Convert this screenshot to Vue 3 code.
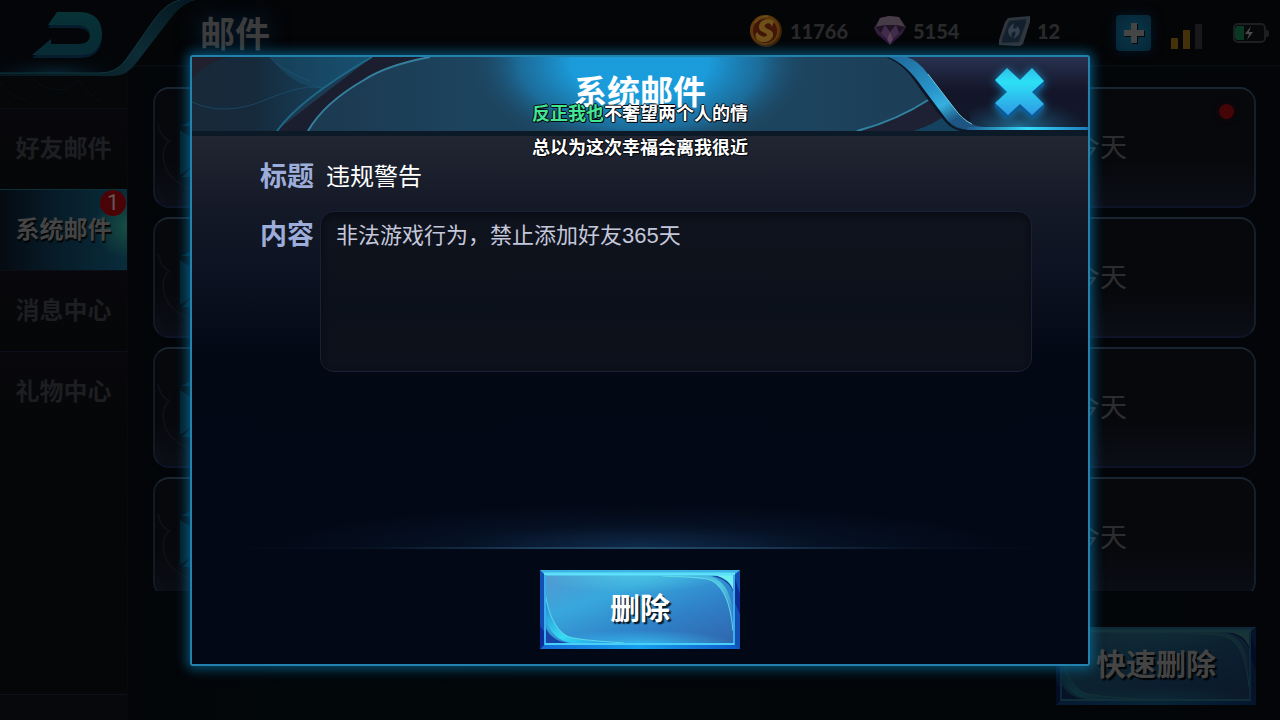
<script setup>
const tabs = [
  { name: '好友邮件' },
  { name: '系统邮件', active: true, count: 1 },
  { name: '消息中心' },
  { name: '礼物中心' },
]
const mails = [
  { id: 1, date: '今天', unread: true },
  { id: 2, date: '今天' },
  { id: 3, date: '今天' },
  { id: 4, date: '今天' },
]
const subject = '违规警告'
const content = '非法游戏行为，禁止添加好友365天'
</script>

<template>
  <div class="screen">
    <svg class="defs" width="0" height="0" aria-hidden="true">
      <defs>
        <linearGradient id="plateFace" x1="0" y1="0" x2="1" y2="1">
          <stop offset="0" stop-color="#5296d0" />
          <stop offset=".3" stop-color="#38a8dc" />
          <stop offset=".65" stop-color="#2f80c8" />
          <stop offset="1" stop-color="#3065ac" />
        </linearGradient>
        <radialGradient id="plateTop" cx=".45" cy="0" r=".5">
          <stop offset="0" stop-color="#4cc8e4" stop-opacity=".8" />
          <stop offset="1" stop-color="#4cc8e4" stop-opacity="0" />
        </radialGradient>
        <radialGradient id="plateBottom" cx=".5" cy="1" r=".5">
          <stop offset="0" stop-color="#35c4f4" stop-opacity=".8" />
          <stop offset="1" stop-color="#35c4f4" stop-opacity="0" />
        </radialGradient>
        <linearGradient id="plateEdge" x1="0" y1="0" x2="1" y2="0">
          <stop offset="0" stop-color="#156bd8" />
          <stop offset=".5" stop-color="#18a0ec" />
          <stop offset="1" stop-color="#0e58c8" />
        </linearGradient>
        <linearGradient id="plateCurl" x1="0" y1="0" x2="1" y2="1">
          <stop offset="0" stop-color="#2675d0" />
          <stop offset=".55" stop-color="#34dcf4" />
          <stop offset="1" stop-color="#2389dc" />
        </linearGradient>
        <linearGradient id="plateCurlTop" x1="0" y1="0" x2="1" y2="1">
          <stop offset="0" stop-color="#3aa4dc" />
          <stop offset=".5" stop-color="#4fc8e0" />
          <stop offset="1" stop-color="#2f6cc0" />
        </linearGradient>
      </defs>
      <symbol id="plate" viewBox="0 0 200 78" preserveAspectRatio="none">
        <path fill="#1250b4" d="M0 0H200V78H0z" />
        <path fill="#3db4e6" d="M0 0H200L194 5H5z" />
        <path fill="url(#plateEdge)" d="M0 78L5 73H194L200 78z" />
        <path fill="#0c2c98" d="M0 55L5 62V73L0 78zM194 5L200 24V44L194 30z" />
        <path fill="url(#plateFace)" d="M5 5H194V73H5z" />
        <path fill="url(#plateTop)" d="M5 5H194V40H5z" />
        <path fill="url(#plateBottom)" d="M5 45H194V73H5z" />
        <path fill="#1742a8" d="M5 55C9 66 18 72 32 72H5zM172 6C187 9 194 18 194 28V6z" />
        <path fill="url(#plateCurl)" d="M5 22C9 49 19 64 32 67C48 70 65 71 84 72H32C15 70 5 56 5 40z" />
        <path fill="url(#plateCurlTop)" d="M122 6H168C184 9 193 24 193 48V60C190 27 181 12 167 9C153 7 137 7 122 6z" />
        <path fill="#6ff0ee" d="M174 5H194V22C191 13 186 8 174 5z" />
        <path fill="none" stroke="#5dd6e8" stroke-width="1" d="M5 22C9 49 19 64 32 67C48 70 65 71 84 72M122 6C153 7 160 7 167 9C181 12 190 27 193 60" />
        <path fill="none" stroke="#5ee0fa" stroke-width="3" d="M4 4H195" />
        <path fill="none" stroke="#38aef0" stroke-width="2" d="M5 5V73H194V5" />
        <path fill="none" stroke="#48d0fa" stroke-width="2" d="M5 73H194" />
      </symbol>
    </svg>

    <header class="topbar">
      <button class="back" aria-label="返回">
        <svg viewBox="0 0 200 78">
          <defs>
            <linearGradient id="ribbon" x1="0" y1="1" x2="1" y2="0">
              <stop offset="0" stop-color="#06171f" />
              <stop offset=".5" stop-color="#0c2c35" />
              <stop offset="1" stop-color="#051720" />
            </linearGradient>
            <radialGradient id="shine" cx=".4" cy="1" r=".6">
              <stop offset="0" stop-color="#082433" stop-opacity=".9" />
              <stop offset="1" stop-color="#04080d" stop-opacity="0" />
            </radialGradient>
            <linearGradient id="arrow" x1="0" y1="0" x2="0" y2="1">
              <stop offset="0" stop-color="#073236" />
              <stop offset="1" stop-color="#082a34" />
            </linearGradient>
          </defs>
          <path fill="#030508" d="M0 0H178L130 62Q120 74 108 74H0z" />
          <path fill="url(#shine)" d="M0 42H136L125 66Q118 73 108 73H0z" />
          <path fill="url(#ribbon)" d="M0 73H100Q116 73 125 61L154 20Q166 3 180 0H196Q184 3 174 14L137 62Q127 76 114 76H0z" />
          <path fill="none" stroke="#0f363d" stroke-width="1" d="M0 73H100Q116 73 125 61L154 20Q166 3 180 0" />
          <path fill="#041c2b" d="M57 15L48 28H78Q90 29 90 38T78 47H51V42L32 58H82Q100 57 102 38Q102 17 82 15z" />
          <path fill="url(#arrow)" d="M57 12L48 25H78Q90 26 90 35T78 44H51V39L32 55H82Q100 54 102 35Q102 14 82 12z" />
        </svg>
      </button>
      <h1>邮件</h1>

      <div class="status">
        <div class="coin">
          <svg width="32" height="34" viewBox="0 0 32 34">
            <circle cx="16" cy="17" r="16" fill="#3a2007" />
            <circle cx="15" cy="16" r="15" fill="#5c380c" />
            <circle cx="15" cy="17" r="12" fill="#421508" />
            <path fill="#6e5119" d="M24 7C18 3 8 6 9 14C10 19 17 18 17 21C16 24 10 23 7 18C3 23 8 29 15 28C23 27 26 19 20 16C15 14 13 12 16 10C19 8 21 10 22 13z" />
            <path fill="none" stroke="#705b28" d="M5 9Q9 2 18 2" />
          </svg>
          <span>11766</span>
        </div>
        <div class="gem">
          <svg width="33" height="30" viewBox="0 0 33 30">
            <path fill="#302039" d="M1 12L7 2L16 0L26 1L33 11L29 18L17 29L4 18z" />
            <path fill="#453c47" d="M7 2L16 0L12 9L3 11zM16 0L26 1L23 9L12 9zM26 1L32 11L23 9z" />
            <path fill="#201326" d="M3 11L12 9L8 17zM12 9H23L17 16zM23 9L32 11L26 17z" />
            <path fill="#402b4a" d="M8 17L12 9L17 16L14 23zM17 16L23 9L26 17L20 23z" />
            <path fill="#301441" d="M5 18L14 23L17 29zM20 23L29 17L17 29z" />
            <path fill="#594358" d="M14 23L17 16L20 23L17 28z" />
          </svg>
          <span>5154</span>
        </div>
        <div class="ticket">
          <svg width="33" height="31" viewBox="0 0 33 31">
            <path fill="#30363d" d="M10 2L32 0V6L25 28L22 30L1 29V24L7 6z" />
            <path fill="#131f2c" d="M11 5L28 3V7L21 26L4 27V23z" />
            <path fill="none" stroke="#222b35" d="M11 5L28 3V7L21 26L4 27V23z" />
            <path fill="#33404e" d="M16 7C9 12 8 17 14 22C13 18 13 17 17 15C18 18 17 20 15 23C22 19 24 15 19 10C19 13 17 13 15 12z" />
          </svg>
          <span>12</span>
        </div>
        <div class="add">
          <button aria-label="添加">
            <svg width="22" height="22" viewBox="0 0 22 22">
              <path fill="#02090e" d="M9 2H15V9H22V15H15V22H9V15H2V9H9z" />
              <path fill="#454545" d="M8 1H14V8H21V14H14V21H8V14H1V8H8z" />
            </svg>
          </button>
        </div>
        <svg class="signal" width="32" height="26" viewBox="0 0 32 26">
          <path fill="#443109" d="M0 15H7V26H0zM12 7H19V26H12z" />
          <path fill="#18181c" d="M24 1H31V26H24z" />
        </svg>
        <svg class="battery" width="36" height="20" viewBox="0 0 36 20">
          <rect x="1" y="1" width="31" height="18" rx="4" fill="#06080a" stroke="#1d2023" stroke-width="2" />
          <path fill="#0a3923" d="M4 3H11V17H4Q2 16 2 14V6Q2 4 4 3z" />
          <path fill="#1d2023" d="M33 7H34Q36 7 36 9V12Q36 14 34 14H33z" />
          <path fill="#4a4a4a" d="M18 3L12 11H16L14 17L20 9H16z" />
        </svg>
      </div>
    </header>

    <main class="main">
      <nav class="sidebar">
        <svg class="flourish" viewBox="0 0 128 34">
          <path fill="none" stroke="#080f14" stroke-width="1" d="M0 8Q13 26 27 26M32 3Q43 16 59 16Q71 16 79 6Q91 24 102 27" />
        </svg>
        <button v-for="tab in tabs" :key="tab.name" class="tab" :class="{ active: tab.active }">
          {{ tab.name }}
          <span v-if="tab.count" class="badge">{{ tab.count }}</span>
        </button>
        <div class="sidefoot"></div>
      </nav>

      <section class="inbox">
        <ul class="mails">
          <li v-for="mail in mails" :key="mail.id">
            <svg class="emblem" viewBox="0 0 60 121">
              <path fill="none" stroke="#0d1014" stroke-width="2" d="M3 35Q5 47 14 52Q4 62 11 80Q22 101 60 107" />
              <path fill="#0c0e17" d="M2 93Q7 108 17 119Q5 120 2 105zM18 112Q35 106 60 119H25z" />
              <path fill="#031d29" d="M25 41L36 48V78L25 86z" />
              <path fill="#04202c" d="M26 37L36 32V37zM27 88L36 79V88z" />
            </svg>
            <time>{{ mail.date }}</time>
            <i v-if="mail.unread" class="dot"></i>
          </li>
        </ul>
        <button class="plate quick">
          <svg><use href="#plate" /></svg>
          <span>快速删除</span>
        </button>
      </section>
    </main>

    <div class="layer">
      <section class="dialog" role="dialog" aria-labelledby="dialogTitle">
        <header class="dialoghead">
          <svg class="art" viewBox="0 0 896 74" preserveAspectRatio="none" aria-hidden="true">
            <defs>
              <linearGradient id="headBase" x1="0" y1="0" x2="1" y2="0">
                <stop offset="0" stop-color="#1b3144" />
                <stop offset=".32" stop-color="#1d445f" />
                <stop offset=".68" stop-color="#1d445f" />
                <stop offset="1" stop-color="#1c3349" />
              </linearGradient>
              <radialGradient id="headLight">
                <stop offset="0" stop-color="#1a9cdc" />
                <stop offset=".4" stop-color="#1b9bda" />
                <stop offset=".7" stop-color="#1b7aae" stop-opacity=".75" />
                <stop offset="1" stop-color="#1d445f" stop-opacity="0" />
              </radialGradient>
              <linearGradient id="leaf" x1="0" y1="0" x2="1" y2="0">
                <stop offset="0" stop-color="#182939" />
                <stop offset=".35" stop-color="#162a3c" />
                <stop offset="1" stop-color="#174d6c" />
              </linearGradient>
              <linearGradient id="bay" x1="0" y1="0" x2="0" y2="1">
                <stop offset="0" stop-color="#27314f" />
                <stop offset=".45" stop-color="#14162a" />
                <stop offset="1" stop-color="#111729" />
              </linearGradient>
              <radialGradient id="bayGlow" cx=".45" cy="1" r=".55">
                <stop offset="0" stop-color="#2786b0" stop-opacity=".8" />
                <stop offset="1" stop-color="#1d4a6c" stop-opacity="0" />
              </radialGradient>
              <linearGradient id="sash" x1="0" y1="0" x2="1" y2="1">
                <stop offset="0" stop-color="#1f6898" />
                <stop offset=".4" stop-color="#2894ca" />
                <stop offset=".55" stop-color="#35b0e0" />
                <stop offset=".7" stop-color="#1d5784" />
                <stop offset="1" stop-color="#244d75" />
              </linearGradient>
              <linearGradient id="rim" x1="0" y1="0" x2="1" y2="0">
                <stop offset="0" stop-color="#1d5d90" />
                <stop offset=".5" stop-color="#35dcfb" />
                <stop offset="1" stop-color="#1c7cba" />
              </linearGradient>
            </defs>
            <path fill="url(#headBase)" d="M0 0H896V74H0z" />
            <ellipse cx="448" cy="6" rx="172" ry="94" fill="url(#headLight)" />
            <path fill="#1b1e2e" d="M180 0H238Q195 8 172 23Q132 46 116 74H84z" />
            <path fill="url(#leaf)" d="M0 0H180Q108 42 84 74H0z" />
            <path fill="#20202e" d="M0 0H36Q14 6 0 21z" />
            <path fill="#1a5879" opacity=".4" d="M78 0H180L132 32Q100 30 78 0z" />
            <path fill="none" stroke="#1c6082" opacity=".5" d="M78 0Q90 14 118 24M0 45Q33 60 73 43T132 31" />
            <path fill="none" stroke="#1d6888" stroke-width="2" d="M180 0Q108 42 85 74" />
            <path fill="none" stroke="#35809e" stroke-width="2" d="M238 0Q195 8 172 23Q132 46 116 74" />
            <path fill="#1d2133" d="M738 42Q704 64 665 74H722Q743 67 752 59z" />
            <path fill="#15425e" d="M722 74Q743 67 752 59L776 74z" />
            <path fill="none" stroke="#2f819e" stroke-width="2" d="M738 42Q704 64 665 74" />
            <path fill="url(#bay)" d="M705 0H896V74H776Q756 70 745 55z" />
            <path fill="url(#bayGlow)" d="M770 20H896V71H780z" />
            <path fill="none" stroke="#0b1727" stroke-width="2" d="M696 0Q714 7 730 32L754 64Q762 74 777 74" />
            <path fill="url(#sash)" d="M696 0H715Q727 4 736 17L763 52Q774 68 792 70H820V73H777Q763 72 755 63L731 31Q714 6 696 0z" />
            <path fill="none" stroke="#70c7d6" stroke-width="1" d="M736 17L763 52Q770 62 780 67" />
            <path fill="url(#rim)" d="M775 70H896V73H775z" />
          </svg>
          <h2 id="dialogTitle">系统邮件</h2>
          <button class="close" aria-label="关闭">
            <svg width="50" height="54" viewBox="0 0 50 54">
              <defs>
                <linearGradient id="cross" x1="0" y1="0" x2="0" y2="1">
                  <stop offset="0" stop-color="#2ebdea" />
                  <stop offset=".3" stop-color="#2ce0f5" />
                  <stop offset="1" stop-color="#2f9ae4" />
                </linearGradient>
              </defs>
              <path fill="#0c5a98" d="M12 4L25 16L37 4L49 15V19L39 27L49 38V41L38 52L25 41L12 52L0 40V37L12 27L0 14z" />
              <path fill="url(#cross)" d="M12 1L25 13L37 1L49 14L37 25L49 37L37 48L25 37L13 48L0 36L12 25L0 13z" />
            </svg>
          </button>
        </header>

        <div class="dialogbody">
          <div class="fields">
            <span class="label">标题</span>
            <p class="subject">{{ subject }}</p>
            <label class="label" for="content">内容</label>
            <textarea id="content" readonly :value="content"></textarea>
          </div>
          <footer>
            <div class="flare"></div>
            <button class="plate remove">
              <svg><use href="#plate" /></svg>
              <span>删除</span>
            </button>
          </footer>
        </div>
      </section>
    </div>

    <div class="lyrics">
      <p><em>反正我也</em>不奢望两个人的情</p>
      <p>总以为这次幸福会离我很近</p>
    </div>
  </div>
</template>

<style>
body { margin: 0; background: #030508; }
</style>

<style scoped>
* { box-sizing: border-box; }
.screen {
  position: relative;
  display: flex;
  flex-direction: column;
  height: 100vh;
  overflow: hidden;
  background: #030508;
  font-family: "Liberation Sans", "Noto Sans CJK SC", sans-serif;
}
button { border: 0; padding: 0; background: none; font: inherit; color: inherit; }
h1, h2, p, ul { margin: 0; padding: 0; }
svg { display: block; }
.defs { position: absolute; }

.topbar {
  display: flex;
  height: 67px;
  flex: none;
  padding-right: 11px;
  border-bottom: 2px solid #070b0f;
  background: #040507;
}
.back { align-self: flex-start; width: 200px; height: 78px; position: relative; z-index: 1; }
h1 { font-size: 35px; line-height: 70px; color: #3c3c3c; text-shadow: 0 0 24px #062541; }
.status { display: flex; margin-left: auto; height: 62px; align-items: center; }
.status div { display: flex; align-items: center; gap: 8px; }
.status span { font: 900 20px/24px Lato, sans-serif; color: #29292b; }
.status .coin { width: 123px; }
.status .gem { width: 125px; gap: 7px; }
.status .ticket { width: 118px; gap: 6px; }
.add { width: 55px; }
.add button {
  display: grid;
  place-items: center;
  width: 35px;
  height: 36px;
  margin-top: 4px;
  border-radius: 4px;
  background: radial-gradient(#08374a, #062636);
  box-shadow: 0 0 12px #03182a;
}
.signal { margin: 10px 30px 0 0; }
.battery { margin-top: 4px; }

.main { display: flex; flex: 1; min-height: 0; }
.sidebar {
  display: flex;
  flex-direction: column;
  width: 128px;
  border-right: 1px solid #08090c;
  background: linear-gradient(#060709, #050607);
}
.flourish { width: 100%; height: 34px; margin-top: 7px; }
.tab {
  position: relative;
  height: 81px;
  border-top: 1px solid #0c0d17;
  background: linear-gradient(#08080c, #050607);
  color: #1d1e22;
  font-weight: 700;
  font-size: 24px;
  line-height: 80px;
}
.tab.active {
  border-color: #0d3038;
  background:
    radial-gradient(circle at 100% 45%, #174d43, #174d4300 25%),
    linear-gradient(90deg, #050b11, #071c29 45%, #082c3b);
  color: #454545;
  text-shadow: 1px 2px 1px #020405;
}
.badge {
  position: absolute;
  top: 0;
  right: 1px;
  width: 26px;
  height: 26px;
  border-radius: 50%;
  background: radial-gradient(#420608, #510003);
  color: #6a5655;
  font: 400 22px/26px Roboto, sans-serif;
  text-shadow: none;
}
.sidefoot { height: 26px; margin-top: auto; border-top: 1px solid #0d1016; background: #07080c; }

.inbox {
  display: flex;
  flex-direction: column;
  flex: 1;
  min-width: 0;
  padding: 20px 24px 15px 25px;
  background: linear-gradient(90deg, #030508, #02070a 15%, #030508);
}
.mails { display: flex; flex-direction: column; gap: 9px; flex: 1; min-height: 0; overflow: hidden; list-style: none; }
.mails li {
  position: relative;
  display: flex;
  flex: none;
  justify-content: flex-end;
  align-items: center;
  height: 121px;
  padding-right: 127px;
  overflow: hidden;
  border: 2px solid;
  border-color: #192631 #151f2b #0e1328 #121a26;
  border-radius: 16px;
  background: linear-gradient(#06080b 60%, #0c0e17);
}
.mails time { font-size: 27px; line-height: 40px; color: #2c2d2f; }
.emblem { position: absolute; left: 0; top: 0; width: 60px; height: 121px; }
.dot { position: absolute; top: 15px; right: 20px; width: 15px; height: 15px; border-radius: 50%; background: #440507; box-shadow: 0 0 6px #24030a; }

.plate { position: relative; width: 200px; height: 78px; padding-bottom: 8px; font-size: 30px; font-weight: 700; }
.plate svg { position: absolute; inset: 0; width: 100%; height: 100%; }
.plate span { position: relative; }
.quick { flex: none; align-self: flex-end; margin-top: 36px; color: #444; text-shadow: 2px 2px 1px #010406; }
.quick svg { opacity: .2; }

.layer {
  position: absolute;
  inset: 0;
  display: flex;
  justify-content: center;
  padding: 55px 0 54px;
}
.dialog {
  display: flex;
  flex-direction: column;
  width: 70.3%;
  border: 2px solid #2382ad;
  border-radius: 3px;
  box-shadow: 0 0 12px 3px #0877a8aa;
  background: #020814;
}
.dialoghead {
  position: relative;
  display: grid;
  grid-template-columns: 1fr auto 1fr;
  align-items: center;
  height: 79px;
  flex: none;
  padding: 0 43px 5px 43px;
  border-bottom: 5px solid #0b1a26;
}
.art { position: absolute; inset: 0; width: 100%; height: 74px; }
h2 { position: relative; grid-column: 2; color: #fff; font-size: 33px; line-height: 72px; }
.close { position: relative; justify-self: end; margin-top: 2px; filter: drop-shadow(0 0 4px #1685ba); }
.dialogbody {
  display: flex;
  flex-direction: column;
  flex: 1;
  background: linear-gradient(#222633, #141927 14%, #0d1322 25%, #020814 42%, #020816);
}
.fields {
  display: grid;
  grid-template-columns: 60px 1fr;
  grid-template-rows: 40px auto;
  row-gap: 15px;
  padding: 20px 56px 0 68px;
}
.label { color: #9dadd9; font-size: 27px; font-weight: 700; line-height: 42px; white-space: nowrap; }
label.label { line-height: 48px; }
.subject { padding-left: 6px; color: #fff; font-size: 24px; line-height: 42px; }
textarea {
  display: block;
  width: 100%;
  height: 161px;
  padding: 8px 15px;
  border: 1px solid #1a2136;
  border-radius: 14px;
  outline: 0;
  resize: none;
  background: linear-gradient(#0f131d, #0b111a 60%, #0d111b);
  box-shadow: inset 0 3px 6px #080b12;
  color: #c5c7db;
  font: 400 22px/32px "Liberation Sans", "Noto Sans CJK SC", sans-serif;
}
footer { display: flex; flex-direction: column; align-items: center; margin-top: auto; padding-bottom: 15px; }
.flare {
  width: 92%;
  height: 50px;
  margin-bottom: 21px;
  border-bottom: 2px solid;
  border-image: linear-gradient(90deg, #18304800, #18304840 18%, #1d3d5c 38%, #224a6b 50%, #1d3d5c 62%, #18304840 82%, #18304800) 1;
  background: radial-gradient(ellipse 45% 90% at 50% 100%, #0f2a4a, #0a1c3670 50%, #02081400);
}
.remove { height: 79px; color: #fff; text-shadow: 2px 2px 1px #071c2b; }

.lyrics {
  position: absolute;
  top: 97px;
  left: 0;
  right: 0;
  text-align: center;
  color: #fff;
  font-size: 18px;
  font-weight: 700;
  line-height: 34px;
  text-shadow: 1px 0 #080c10, -1px 0 #080c10, 0 1px #080c10, 0 -1px #080c10, 1px 1px #080c10;
  pointer-events: none;
}
.lyrics em { font-style: normal; color: #43e695; }
</style>
